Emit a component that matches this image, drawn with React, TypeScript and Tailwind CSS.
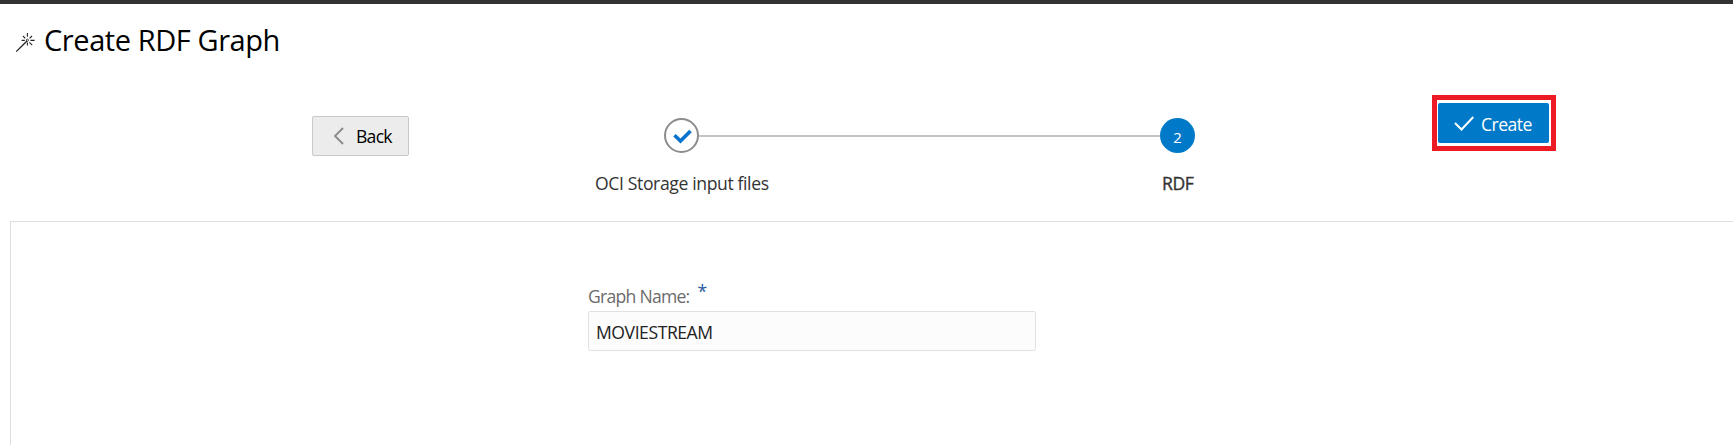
import React from 'react';

function WandIcon() {
  return (
    <svg className="mt-[29px] h-5 w-5 shrink-0" viewBox="0 0 20 20" fill="none" stroke="#222" strokeWidth="1.1">
      <path d="M1.2 18.6 12 8" strokeWidth="1.3" />
      <path d="M12.4 0v3.8M12.4 9.4v3M15.4 7.4h4.2M6.6 7.4h3.2M8 3l2.3 2.3M17 3l-2.4 2.4M14.4 9.4l2.8 2.7" />
      <circle cx="12.4" cy="7.2" r="1.1" strokeWidth="0.8" />
    </svg>
  );
}

function BackButton() {
  return (
    <button className="ml-[312px] mt-[21px] flex h-10 w-[97px] shrink-0 items-center rounded-[2px] border border-[#c9c9c9] bg-[#ececec] text-black">
      <svg className="ml-5 h-[18px] w-[11px]" viewBox="0 0 11 18" fill="none" stroke="#8b8b8b" strokeWidth="1.9">
        <path d="M10 1 2 9l8 8" />
      </svg>
      <span className="-mt-px ml-[12px] text-[17.6px] leading-6 tracking-[-0.75px]">Back</span>
    </button>
  );
}

function Stepper() {
  return (
    <div className="ml-[187px] mt-[23px] w-[664px]">
      <div className="flex items-center pl-[68px]">
        <div className="flex h-[35px] w-[35px] items-center justify-center rounded-full border-2 border-[#8b8d8f]">
          <svg className="ml-[1px] mt-[2px] h-[15px] w-[19px]" viewBox="0 0 19 15" fill="none" stroke="#0572ce" strokeWidth="3.6">
            <path d="m1.5 6.2 6 5.8L17.5 2" />
          </svg>
        </div>
        <div className="h-[2px] w-[461px] bg-[#c4c4c4]" />
        <div className="flex h-[35px] w-[35px] items-center justify-center rounded-full bg-[#007ac8] pt-[3px] text-[15px] leading-5 text-white">2</div>
      </div>
      <div className="flex whitespace-nowrap pt-[18px] text-[17.6px] leading-6 text-[#333]">
        <span className="-ml-px w-[567px] tracking-[-0.38px]">OCI Storage input files</span>
        <span className="tracking-[-0.4px] [-webkit-text-stroke:0.35px_#333]">RDF</span>
      </div>
    </div>
  );
}

function CreateButton() {
  return (
    <div className="ml-[172px] h-14 w-[124px] shrink-0 border-[5px] border-[#ed1c24] pl-[1px] pt-[3px]">
      <button className="flex h-10 w-[111px] items-center rounded-[2px] bg-[#007ac8] text-white">
        <svg className="ml-4 h-[15px] w-5" viewBox="0 0 20 15" fill="none" stroke="currentColor" strokeWidth="2">
          <path d="m1 7 6.5 6.5L19.3 1" />
        </svg>
        <span className="ml-[7px] mt-[1px] text-[17.6px] leading-6 tracking-[-0.55px]">Create</span>
      </button>
    </div>
  );
}

export default function App() {
  return (
    <div className="flex h-[445px] w-[1733px] flex-col overflow-hidden bg-white font-['Open_Sans',sans-serif]">
      <div className="h-1 shrink-0 bg-[#333132]" />
      <header className="flex h-[91px] shrink-0 pl-[15px]">
        <WandIcon />
        <h1 className="ml-[9px] mt-[16px] whitespace-nowrap text-[29px] leading-10 tracking-[-0.42px] text-black">Create RDF Graph</h1>
      </header>
      <div className="flex h-[126px] shrink-0 items-start">
        <BackButton />
        <Stepper />
        <CreateButton />
      </div>
      <main className="ml-[10px] flex-1 border-l border-t border-[#dfdfdf] pl-[577px] pt-[61px]">
        <label className="flex h-7 text-[17.6px] leading-6 text-[#6b6b6b]">
          <span className="mt-[1px] whitespace-nowrap tracking-[-0.75px]">Graph Name:</span>
          <span className="-mt-[4px] ml-2 text-[#2a5a9e]">*</span>
        </label>
        <input
          className="block h-10 w-[448px] rounded-[2px] border border-[#dfe1e3] bg-[#fcfcfc] px-[7px] pt-[1px] text-[17.6px] tracking-[-0.45px] text-[#222] outline-none"
          defaultValue="MOVIESTREAM"
        />
      </main>
    </div>
  );
}
